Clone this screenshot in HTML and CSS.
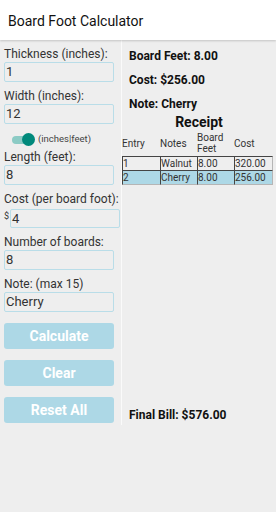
FILE: index.html
```html
<html>
<head>
<meta charset="utf-8">
<link rel="stylesheet" href="styles.css">
</head>
<body>

<div class="app-bar">Board Foot Calculator</div>

<div class="main">
    <div class="form-col">
        <div class="field-label">Thickness (inches):</div>
        <div class="field">1</div>

        <div class="field-label">Width (inches):</div>
        <div class="field">12</div>

        <div class="unit-toggle">
            <span class="switch"><span class="switch-thumb"></span></span>
            <span class="switch-text">(inches|feet)</span>
        </div>

        <div class="field-label tight">Length (feet):</div>
        <div class="field">8</div>

        <div class="field-label">Cost (per board foot):</div>
        <div class="money-row">
            <span class="dollar">$</span>
            <div class="field money">4</div>
        </div>

        <div class="field-label">Number of boards:</div>
        <div class="field">8</div>

        <div class="field-label">Note: (max 15)</div>
        <div class="field">Cherry</div>

        <div class="btn first">Calculate</div>
        <div class="btn">Clear</div>
        <div class="btn">Reset All</div>
    </div>

    <div class="result-col">
        <div class="result first">Board Feet: 8.00</div>
        <div class="result">Cost: $256.00</div>
        <div class="result">Note: Cherry</div>

        <div class="receipt-title">Receipt</div>
        <table class="receipt">
            <thead>
                <tr>
                    <th class="c-entry">Entry</th>
                    <th class="c-notes">Notes</th>
                    <th class="c-bf">Board<br>Feet</th>
                    <th class="c-cost">Cost</th>
                </tr>
            </thead>
            <tbody>
                <tr>
                    <td>1</td><td>Walnut</td><td>8.00</td><td class="last">320.00</td>
                </tr>
                <tr class="current">
                    <td>2</td><td>Cherry</td><td>8.00</td><td class="last">256.00</td>
                </tr>
            </tbody>
        </table>

        <div class="final-bill">Final Bill: $576.00</div>
    </div>
</div>

</body>
</html>
```

FILE: styles.css
```css
body {
    margin: 0;
    background-color: #eeeeee;
    font-family: Roboto, "Noto Sans", sans-serif;
    color: #222;
}

.app-bar {
    height: 40px;
    line-height: 43px;
    padding-left: 8px;
    background-color: #ffffff;
    font-size: 14px;
    color: #111;
    box-shadow: 0 1px 2px rgba(0, 0, 0, 0.18);
    position: relative;
}

.main {
    display: flex;
}

/* left side: inputs */
.form-col {
    width: 117px;
    padding: 6px 0 2px 4px;
    border-right: 1px solid #fafafa;
}

.field-label {
    font-size: 12px;
    line-height: 16px;
    color: #333;
    margin-top: 6px;
}

.form-col .field-label:first-child {
    margin-top: 0;
}

.field-label.tight {
    margin-top: -1px;
}

.field {
    box-sizing: border-box;
    width: 110px;
    height: 20px;
    border: 1px solid #b9dde8;
    border-radius: 2px;
    font-size: 13px;
    line-height: 18px;
    padding-left: 1px;
    color: #333;
}

.unit-toggle {
    display: flex;
    align-items: center;
    height: 20px;
    margin-top: 6px;
    padding-left: 8px;
}

.switch {
    position: relative;
    width: 20px;
    height: 8px;
    border-radius: 4px;
    background-color: #8ccbc5;
}

.switch-thumb {
    position: absolute;
    right: -3px;
    top: -3px;
    width: 13px;
    height: 13px;
    border-radius: 50%;
    background-color: #00897b;
}

.switch-text {
    font-size: 9.5px;
    color: #444;
    margin-left: 6px;
    margin-top: -4px;
}

.money-row {
    display: flex;
    align-items: flex-start;
    margin-top: 2px;
}

.dollar {
    font-size: 9px;
    color: #333;
    width: 6px;
    line-height: 14px;
}

.field.money {
    width: 110px;
    height: 19px;
}

.btn {
    box-sizing: border-box;
    width: 110px;
    height: 26px;
    line-height: 26px;
    margin-top: 11px;
    border-radius: 3px;
    background-color: #add8e6;
    color: #ffffff;
    font-weight: bold;
    font-size: 14px;
    text-align: center;
}

/* right side: results */
.result-col {
    flex: 1;
    display: flex;
    flex-direction: column;
    padding-bottom: 2px;
}

.result {
    font-size: 12px;
    font-weight: bold;
    color: #111;
    padding-left: 7px;
    line-height: 16px;
    margin-top: 8px;
}

.result.first {
    margin-top: 8px;
}

.receipt-title {
    text-align: center;
    font-size: 14px;
    font-weight: bold;
    line-height: 16px;
    margin-top: 2px;
    color: #111;
}

.receipt {
    width: 151px;
    border-collapse: separate;
    border-spacing: 0;
    font-size: 10px;
    color: #333;
}

.receipt th {
    font-weight: normal;
    text-align: left;
    padding: 2px 0 2px 0;
    line-height: 11px;
    vertical-align: middle;
}

.receipt .c-entry { width: 38px; }
.receipt .c-notes { width: 37px; }
.receipt .c-bf { width: 37px; }

.receipt td {
    padding: 0;
    height: 13px;
    line-height: 13px;
    border-top: 1px solid #444;
    border-left: 1px solid #444;
}

.receipt td.last {
    border-right: 1px solid #b5b5b5;
}

.receipt tbody tr:last-child td {
    border-bottom: 1px solid #b5b5b5;
}

.receipt tr.current td {
    background-color: #add8e6;
}

.final-bill {
    margin-top: auto;
    padding-left: 7px;
    font-size: 12px;
    font-weight: bold;
    line-height: 16px;
    color: #111;
}
```
